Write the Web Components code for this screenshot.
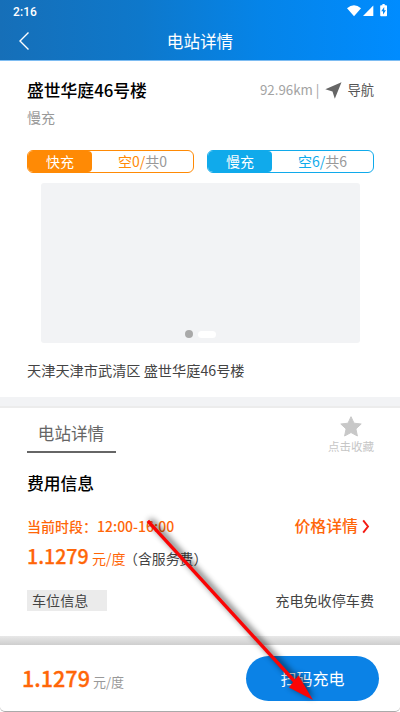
<!DOCTYPE html>
<html lang="zh-CN">
<head>
<meta charset="utf-8">
<title>电站详情</title>
<style>
html,body{margin:0;height:100%;overflow:hidden;background:#fff}
body{font-family:"Noto Sans CJK SC",sans-serif;color:#333;font-size:14px}
</style>
</head>
<body>
<station-page></station-page>
<script>
const define = (name, html) => {
  const template = document.createElement('template');
  template.innerHTML = '<style>*{box-sizing:border-box}</style>' + html;
  customElements.define(name, class extends HTMLElement {
    constructor() {
      super();
      this.attachShadow({mode: 'open'}).append(template.content.cloneNode(true));
    }
  });
};

define('app-header', `
<style>
:host{display:block;height:61px;background:linear-gradient(90deg,#166fb8,#0e78cb 35%,#0584e8 65%,#008cff);color:#fff;border-bottom:1px solid #7dbcf2}
.status{height:22px;display:flex;align-items:center;justify-content:space-between;padding:0 12px 0 13px;font:500 12px/20px Roboto,sans-serif;letter-spacing:.1px}
.status span{padding-top:1px}
svg{display:block}
nav{height:38px;display:grid;grid-template-columns:60px 1fr 60px;align-items:center;text-align:center;font-size:16.6px;line-height:38px}
nav svg{margin-left:18px}
</style>
<div class="status"><span>2:16</span>
<svg width="42" height="14" viewBox="346 4 42 14" fill="#fff"><path d="M347 8.2Q354 2.4 361 8.2L354 16.2Z"/><path d="M373.3 5.6V16H363Z"/><path d="M381 5.3h1.4V4h2.3v1.3h1.5q.8 0 .8.8v9.3q0 .8-.8.8H381q-.8 0-.8-.8V6.1q0-.8.8-.8Z"/><path fill="#0588f5" d="M384.2 7l-3 4.3h1.8V14.6l3-4.4h-1.8Z"/></svg></div>
<nav><svg width="14" height="20" viewBox="0 0 14 20" fill="none" stroke="#fff" stroke-width="1.4"><path d="M10.5 1.4L2 10L10.5 18.6"/></svg><slot></slot></nav>`);

define('charge-badge', `
<style>
:host{display:flex;width:167px;height:23px;border:1px solid var(--tone);border-radius:6px;overflow:hidden;font-size:14px;line-height:21px;text-align:center;color:#999}
.kind{width:64px;background:var(--tone);color:#fff;border-radius:0 4px 4px 0}
.count{flex:1}
::slotted([slot=free]){color:var(--tone)}
</style>
<span class="kind"><slot name="kind"></slot></span><span class="count"><slot name="free"></slot><slot></slot></span>`);

define('photo-carousel', `
<style>
:host{display:flex;width:319px;height:160px;margin:10px 0 0 14px;border-radius:3px;background:#f2f3f5;align-items:flex-end;justify-content:center;gap:5px;padding-bottom:5.5px}
i{height:7px;border-radius:4px}
.dot{width:7.5px;height:7.5px;background:#a9a9a9}
.current{width:18px;background:#fff}
</style><i class="dot"></i><i class="current"></i>`);

define('station-card', `
<style>
:host{display:block;height:336px;padding:17px 26px 0 27px}
.row{display:flex;justify-content:space-between;align-items:center}
h1{margin:0;font-size:16.8px;font-weight:500;line-height:24px;color:#000}
.nav{display:flex;align-items:center;color:#a3a3a3;font-size:13.3px;line-height:24px}
.nav svg{margin:0 5px 0 6px}
.nav b{font-weight:400;color:#555}
.kind{color:#999;line-height:22px;margin-top:4px}
.badges{margin-top:22px}
p{margin:16px 0 0;line-height:22px;font-size:14.2px;color:#444}
</style>
<div class="row"><h1>盛世华庭46号楼</h1><div class="nav">92.96km | <svg width="17" height="17" viewBox="0 0 17 17"><path d="M16.5.3L.3 7.2L7.5 9.4L9.8 16.7Z" fill="#666"/></svg><b>导航</b></div></div>
<div class="kind">慢充</div>
<div class="row badges">
<charge-badge style="--tone:#ff8a05"><span slot="kind">快充</span><span slot="free">空0/</span>共0</charge-badge>
<charge-badge style="--tone:#10aaeb"><span slot="kind">慢充</span><span slot="free">空6/</span>共6</charge-badge></div>
<photo-carousel></photo-carousel>
<p>天津天津市武清区 盛世华庭46号楼</p>`);

define('favorite-button', `
<style>
:host{display:flex;flex-direction:column;align-items:center;font-size:11.5px;line-height:16px;color:#c6c6c6}
svg{display:block;margin-bottom:1px}
</style>
<svg width="22" height="21" viewBox="0 0 22 21"><path d="M11 .7L14 7.2L21.2 8L15.9 12.9L17.4 20L11 16.5L4.6 20L6.1 12.9L.8 8L8 7.2Z" fill="#c8c8c8" stroke="#c8c8c8" stroke-linejoin="round"/></svg><slot></slot>`);

define('fee-section', `
<style>
:host{display:block;height:239px;padding:0 26px 0 27px}
.divider{height:11px;margin:0 -26px 0 -27px;background:#f2f3f5;border-bottom:2px solid #ececec}
.row{display:flex;justify-content:space-between;align-items:center}
.top{align-items:flex-start}
.tab{width:89px;height:45px;border-bottom:2px solid #666;text-align:center;color:#666;font-size:16.6px;line-height:51px;text-indent:-1px}
favorite-button{margin-top:8px}
h2{margin:17px 0 0;font-size:16.8px;font-weight:500;line-height:24px;color:#000}
.time{margin-top:19px;color:#ff6608;font-weight:500;line-height:24px;height:24px;font-size:14px}
.detail{display:flex;align-items:center;font-size:15.9px}
.detail svg{margin:1px 4px 0 4px}
.price{display:flex;align-items:baseline;line-height:30px;height:30px;margin-top:4px;color:#444}
.price strong{font-size:19.6px;font-weight:500;color:#ff6608;-webkit-text-stroke:.25px #ff6608;width:65px}
.price em{font-style:normal;color:#ff6608}
.price span{margin-left:-1.5px;font-size:13.9px}
.price{margin-top:3px}
.park{margin-top:19px;line-height:21px;color:#444;font-size:14.1px}
.park b{font-weight:400;width:80px;height:21px;background:#ebebeb;padding-left:5px}
</style>
<div class="divider"></div>
<div class="row top"><div class="tab">电站详情</div><favorite-button>点击收藏</favorite-button></div>
<h2>费用信息</h2>
<div class="row time"><span>当前时段：12:00-16:00</span><span class="detail">价格详情<svg width="8" height="15" viewBox="0 0 8 15"><path d="M1.2 1.3L6 7.5L1.2 13.7" fill="none" stroke="#f41a12" stroke-width="1.9"/></svg></span></div>
<div class="price"><strong>1.1279</strong><em>元/度</em><span>（含服务费）</span></div>
<div class="row park"><b>车位信息</b><span>充电免收停车费</span></div>`);

define('action-bar', `
<style>
:host{display:block;height:76px;background:#fff}
.shade{height:9px;background:linear-gradient(#e8e8e8,#cecece)}
.bar{height:67px;display:flex;align-items:center;justify-content:space-between;padding:0 21px 0 22px;border-bottom:1px solid #aaa;border-radius:0 0 5px 5px}
.price{display:flex;align-items:baseline;color:#999;font-size:13px;line-height:30px;padding-top:3px}
strong{width:71px;font-size:21.6px;font-weight:500;color:#ff6608;-webkit-text-stroke:.3px #ff6608}
button{width:133px;height:45px;padding:0;border:0;border-radius:23px;background:#0b82e6;color:#fff;font:16px/43px "Noto Sans CJK SC",sans-serif}
</style>
<div class="shade"></div><div class="bar"><span class="price"><strong>1.1279</strong><span>元/度</span></span><button><slot></slot></button></div>`);

define('pointer-arrow', `
<style>
:host{position:absolute;left:0;top:0;width:400px;height:712px;pointer-events:none}
svg{display:block}
</style>
<svg width="400" height="712"><defs><filter id="s" x="-20%" y="-20%" width="140%" height="140%"><feGaussianBlur stdDeviation="3"/></filter></defs>
<g filter="url(#s)" opacity=".6" transform="translate(1 -1)"><path d="M149 521L301 688" stroke="#000" stroke-width="5"/><path d="M313 700L288 687L294 681L298 674Z"/></g>
<path d="M147.8 520.8L297 684" stroke="#fa0505" stroke-width="3.4"/><path d="M313 700L289 687.5L293.5 681.5L298.5 675.5Z" fill="#fa0505"/></svg>`);

define('station-page', `
<style>:host{display:flex;flex-direction:column;width:400px;height:712px;position:relative;background:#fff}</style>
<app-header>电站详情</app-header>
<station-card></station-card>
<fee-section></fee-section>
<action-bar>扫码充电</action-bar>
<pointer-arrow></pointer-arrow>`);
</script>
</body>
</html>
